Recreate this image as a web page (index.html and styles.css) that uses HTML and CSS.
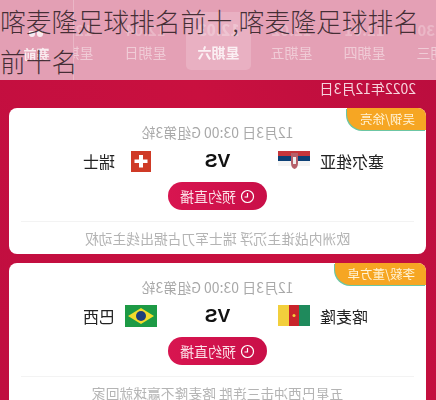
FILE: index.html
```html
<!DOCTYPE html>
<html lang="zh-CN">
<head>
    <meta charset="utf-8">
    <title>喀麦隆足球排名前十</title>
    <link rel="stylesheet" href="styles.css">
</head>
<body>
    <h1 class="title">喀麦隆足球排名前十,喀麦隆足球排名前十名</h1>
    <div class="schedule">
        <div class="tabs">
            <div class="days">
                <div class="day"><b>11.30</b><span>星期三</span></div>
                <div class="day"><b>12.01</b><span>星期四</span></div>
                <div class="day"><b>12.02</b><span>星期五</span></div>
                <div class="day active"><b>12.03</b><span>星期六</span></div>
                <div class="day"><b>12.04</b><span>星期日</span></div>
                <div class="day"><b>12.05</b><span>星期一</span></div>
            </div>
            <div class="past">
                <svg class="past-icon" width="16" height="14" viewBox="0 0 16 14">
                    <path d="M1 1h6v3a3 3 0 0 1-6 0zM9 1h6v3a3 3 0 0 1-6 0zM4 7v6M12 7v6" fill="#fff"/>
                </svg>
                <span>赛前</span>
            </div>
        </div>
        <div class="date">2022年12月3日</div>

        <div class="card">
            <div class="tag">吴钢/徐亮</div>
            <div class="info">12月3日 03:00 G组第3轮</div>
            <div class="teams">
                <div class="team home">
                    <span>塞尔维亚</span>
                    <svg class="flag" width="32" height="22" viewBox="0 0 32 22">
                        <rect y="1" width="32" height="5" fill="#c6363c"/>
                        <rect y="6" width="32" height="5" fill="#0c4076"/>
                        <rect y="11" width="32" height="5" fill="#f4f4f4"/>
                        <path d="M12 3h7v10q0 5-3.500 6-3.500-1-3.500-6z" fill="#b5606a"/>
                        <path d="M14 7h3v7h-3z" fill="#eee"/>
                    </svg>
                </div>
                <div class="vs">VS</div>
                <div class="team">
                    <svg class="flag" width="32" height="22" viewBox="0 0 32 22">
                        <rect x="6" y="1" width="20" height="21" fill="#cf3a26"/>
                        <path d="M14 5h4v4.500h4.500v3.500H18v4.500h-4V13H9.500V9.500H14z" fill="#fff"/>
                    </svg>
                    <span>瑞士</span>
                </div>
            </div>
            <div class="book">
                <svg width="15" height="15" viewBox="0 0 15 15" fill="none" stroke="#fff" stroke-width="1.200">
                    <circle cx="7.500" cy="7.500" r="6"/>
                    <path d="M7.500 4v4h3"/>
                </svg>
                <span>预约直播</span>
            </div>
            <div class="summary">欧洲内战谁主沉浮 瑞士军刀占据出线主动权</div>
        </div>

        <div class="card">
            <div class="tag">李毅/董方卓</div>
            <div class="info">12月3日 03:00 G组第3轮</div>
            <div class="teams">
                <div class="team home">
                    <span>喀麦隆</span>
                    <svg class="flag" width="32" height="22" viewBox="0 0 32 22">
                        <rect width="11" height="21" fill="#1f8a5c"/>
                        <rect x="11" width="10" height="21" fill="#c8242b"/>
                        <rect x="21" width="11" height="21" fill="#f2cf3c"/>
                        <circle cx="16" cy="10.500" r="1.500" fill="#f2cf3c"/>
                    </svg>
                </div>
                <div class="vs">VS</div>
                <div class="team">
                    <svg class="flag" width="32" height="22" viewBox="0 0 32 22">
                        <rect width="32" height="22" fill="#1d9a45"/>
                        <path d="M16 3l13 8-13 8-13-8z" fill="#f3dc2c"/>
                        <circle cx="16" cy="11" r="5" fill="#1d3f7c"/>
                    </svg>
                    <span>巴西</span>
                </div>
            </div>
            <div class="book">
                <svg width="15" height="15" viewBox="0 0 15 15" fill="none" stroke="#fff" stroke-width="1.200">
                    <circle cx="7.500" cy="7.500" r="6"/>
                    <path d="M7.500 4v4h3"/>
                </svg>
                <span>预约直播</span>
            </div>
            <div class="summary">五星巴西冲击三连胜 喀麦隆不赢球就回家</div>
        </div>
    </div>
</body>
</html>
```

FILE: styles.css
```css
html, body {
    margin: 0;
    height: 400px;
    overflow: hidden;
}
body {
    position: relative;
    font-family: "Noto Sans CJK SC", "Liberation Sans", sans-serif;
    background-color: #c20f40;
}
.title {
    position: absolute;
    top: 1px;
    left: 0;
    right: 0;
    z-index: 2;
    margin: 0;
    font-size: 25.800px;
    font-weight: 300;
    line-height: 40px;
    color: rgba(40, 25, 30, 0.85);
}
/* the whole screenshot below the caption is flipped */
.schedule {
    width: 436px;
    height: 400px;
    overflow: hidden;
    transform: scaleX(-1);
    filter: blur(0.5px);
    background: linear-gradient(115deg, #b90d3e 0%, #c9103f 45%, #c00e40 100%);
}
.tabs {
    display: flex;
    height: 80px;
    overflow: hidden;
    background-color: #e4a0b5;
}
.days {
    display: flex;
    flex: 1;
    margin-left: -38px;
    padding-top: 12px;
    min-width: 0;
}
.day {
    flex: 0 0 65px;
    height: 58px;
    margin: 0 4px;
    box-sizing: border-box;
    padding-top: 9px;
    display: flex;
    flex-direction: column;
    align-items: center;
    color: rgba(255, 255, 255, 0.45);
    font-size: 14px;
    border-radius: 5px;
}
.day b {
    font-size: 15px;
    line-height: 18px;
    color: rgba(255, 255, 255, 0.25);
}
.day span {
    line-height: 27px;
}
.day.active {
    background-color: #e9b0c2;
    color: rgba(255, 255, 255, 0.8);
    font-weight: 700;
}
.past {
    position: relative;
    flex: 0 0 74px;
    display: flex;
    flex-direction: column;
    align-items: center;
    padding-top: 30px;
    box-sizing: border-box;
    background-color: #e39fb4;
    border-left: 1px solid #eab6c6;
    color: rgba(255, 255, 255, 0.8);
    font-size: 13px;
    font-weight: 700;
}
.past-icon {
    opacity: 0.8;
}
.date {
    height: 28px;
    line-height: 17px;
    padding-left: 20px;
    font-size: 14px;
    color: #f6d3dc;
}
.card {
    position: relative;
    margin: 0 9px 9px 10px;
    height: 146px;
    box-sizing: border-box;
    background-color: #fff;
    border-radius: 8px;
    text-align: center;
}
.tag {
    position: absolute;
    top: 0;
    left: 0;
    height: 22px;
    padding: 0 13px 0 11px;
    line-height: 22px;
    font-size: 12.500px;
    color: #fff3d6;
    background-color: #f6a623;
    border-radius: 8px 0 16px 0;
    box-shadow: 1px 1px 0 #6cc6a4;
}
.info {
    padding-top: 14px;
    line-height: 20px;
    font-size: 14px;
    color: #a9a9a9;
}
.teams {
    display: grid;
    grid-template-columns: 1fr 121px 1fr;
    align-items: center;
    margin-top: 4px;
    height: 30px;
}
.team {
    display: flex;
    align-items: center;
    gap: 10px;
    font-size: 16px;
    color: #222;
}
.team.home {
    justify-content: flex-end;
}
.flag {
    flex: none;
}
.vs {
    font-family: "Liberation Sans", sans-serif;
    font-size: 19px;
    font-weight: 700;
    color: #111;
}
.book {
    display: flex;
    align-items: center;
    justify-content: center;
    gap: 4px;
    width: 99px;
    height: 28px;
    margin: 6px auto 0;
    border-radius: 14px;
    font-size: 14px;
    color: #fbdfe6;
    background: linear-gradient(90deg, #c90f48, #d81550);
}
.summary {
    margin: 11px 12px 0;
    padding-top: 7px;
    border-top: 1px solid #f3f3f3;
    line-height: 18px;
    font-size: 13.800px;
    color: #b4b4b4;
}
```
